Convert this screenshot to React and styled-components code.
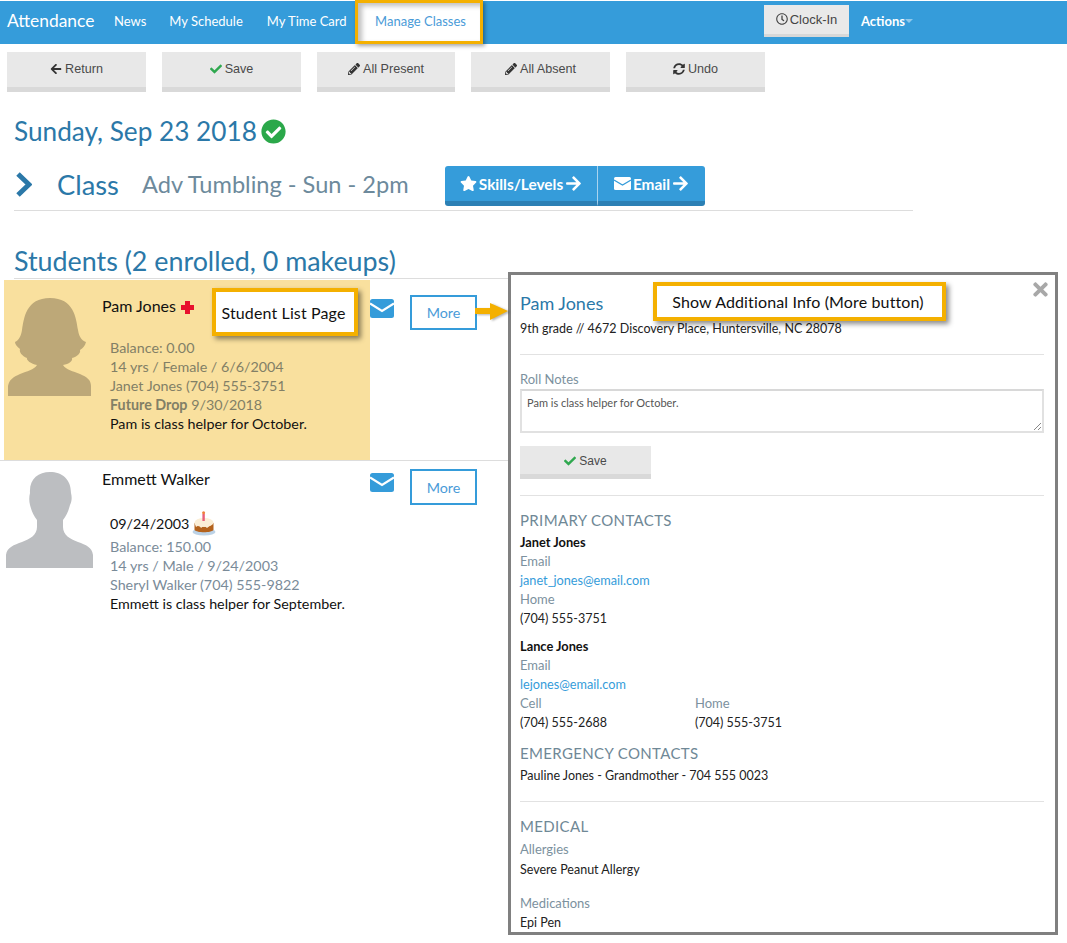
import React from "react";
import styled, { createGlobalStyle } from "styled-components";
import { FaArrowLeft, FaArrowRight, FaCheck, FaCheckCircle, FaPencilAlt, FaRegClock, FaStar, FaSyncAlt, FaTimes } from "react-icons/fa";

const Global = createGlobalStyle`
  html, body { margin: 0; padding: 0; background: #fff; }
  body { font-family: Lato, "Liberation Sans", sans-serif; }
  * { box-sizing: border-box; }
`;

const Page = styled.div`
  position: relative;
  width: 1067px;
  height: 943px;
  overflow: hidden;
  padding-top: 1px;
  background: #fff;
`;

const Nav = styled.nav`
  display: flex;
  align-items: center;
  height: 43px;
  padding: 0 0 4px 7px;
  background: #359cda;
`;
const Brand = styled.div`
  width: 107px;
  font-size: 17.4px;
  color: #fff;
`;
const NavLink = styled.a`
  font-size: 13px;
  color: #fff;
  white-space: nowrap;
  margin-right: ${(p) => p.$gap}px;
`;
const ActiveTab = styled.a`
  display: flex;
  align-items: center;
  justify-content: center;
  align-self: flex-start;
  width: 128px;
  height: 44px;
  margin-top: -1px;
  padding: 0 0 3px 4px;
  font-size: 13px;
  color: #4a9bd8;
  background: #fff;
  border: 3px solid #f4b000;
  box-shadow: inset 4px 3px 5px rgba(0, 0, 0, 0.25), 2px 2px 4px rgba(0, 0, 0, 0.35);
`;
const NavRight = styled.div`
  display: flex;
  align-items: center;
  margin-left: auto;
  margin-right: 155px;
`;
const ClockIn = styled.button`
  display: flex;
  align-items: center;
  justify-content: center;
  gap: 2px;
  width: 85px;
  height: 32px;
  margin-top: 1px;
  padding: 0 0 1px;
  border: 0;
  border-bottom: 3px solid #d8d8d8;
  background: #e9e9e9;
  color: #444;
  font: 13px "Liberation Sans", sans-serif;
`;
const Actions = styled.span`
  display: flex;
  align-items: center;
  margin-left: 12px;
  width: 51px;
  font-size: 13px;
  font-weight: 700;
  color: #fff;
`;
const Caret = styled.span`
  width: 0;
  height: 0;
  border: 4.5px solid transparent;
  border-top: 4.5px solid #8ec8ec;
  border-bottom: 0;
`;

const Toolbar = styled.div`
  display: flex;
  gap: 16px;
  margin: 8px 0 0 7px;
`;
const GrayButton = styled.button`
  display: flex;
  align-items: center;
  justify-content: center;
  gap: 3px;
  flex: 0 0 ${(p) => p.$w || 139}px;
  height: ${(p) => p.$h || 40}px;
  padding: ${(p) => (p.$h ? "2px 0 0" : "0 0 2px")};
  border: 0;
  border-bottom: 5px solid #d9d9d9;
  background: #e8e8e8;
  color: #4a4a4a;
  font: ${(p) => p.$size || 12.6}px "Liberation Sans", sans-serif;
  svg { font-size: 12px; color: #333; }
`;
const Green = styled.span`
  display: flex;
  color: #2fa84f;
  svg { color: #2fa84f; }
`;

const Main = styled.main`
  padding-left: 14px;
`;
const DateHeading = styled.h1`
  display: flex;
  align-items: center;
  gap: 4px;
  height: 36px;
  margin: 21px 0 0;
  font-size: 26.2px;
  font-weight: 400;
  color: #2b78a8;
`;
const CheckBadge = styled.span`
  display: flex;
  font-size: 25px;
  color: #2ba84a;
`;
const ClassRow = styled.div`
  display: flex;
  align-items: center;
  width: 899px;
  height: 58px;
  margin-top: 4px;
  padding-top: 12px;
  border-bottom: 1px solid #ddd;
`;
const Chevron = styled.svg`
  flex: 0 0 17px;
  width: 17px;
  height: 25px;
  margin: -7px 25px 0 1px;
`;
const ClassLabel = styled.span`
  width: 85px;
  margin-top: -7px;
  font-size: 27.3px;
  color: #2b78a8;
`;
const ClassName = styled.span`
  width: 303px;
  margin-top: -7px;
  font-size: 23.6px;
  color: #6d8a9c;
`;
const BlueGroup = styled.div`
  display: flex;
  margin-bottom: 3px;
`;
const BlueButton = styled.button`
  display: flex;
  align-items: center;
  justify-content: center;
  gap: 2px;
  width: ${(p) => p.$w}px;
  height: 40px;
  padding: 0;
  border: 0;
  border-bottom: 5px solid #2c80b5;
  border-right: ${(p) => (p.$first ? "1px solid #a9d4ef" : "0")};
  border-radius: ${(p) => (p.$first ? "3px 0 0 3px" : "0 3px 3px 0")};
  background: #359cda;
  color: #fff;
  font: 700 15.4px Lato, sans-serif;
  svg { font-size: 17px; }
`;
const StudentsHeading = styled.h2`
  width: 496px;
  height: 36px;
  margin: 32px 0 0;
  border-bottom: 1px solid #ddd;
  font-size: 26.85px;
  font-weight: 400;
  line-height: 36px;
  white-space: nowrap;
  color: #2b78a8;
`;

const Row = styled.div`
  display: flex;
  width: 510px;
  height: ${(p) => p.$h}px;
  border-bottom: ${(p) => (p.$last ? "0" : "1px solid #ddd")};
`;
const StudentPanel = styled.div`
  display: flex;
  flex: 0 0 366px;
  margin-left: 4px;
  margin-top: ${(p) => p.$top}px;
  background: ${(p) => (p.$selected ? "#f9e09e" : "transparent")};
`;
const Avatar = styled.svg`
  flex: 0 0 98px;
  width: 98px;
  height: 125px;
`;
const Info = styled.div`
  flex: 1;
  padding-top: ${(p) => p.$pad}px;
`;
const Name = styled.div`
  display: flex;
  align-items: center;
  gap: 5px;
  height: 20px;
  font-size: 16px;
  color: #111;
  margin-bottom: ${(p) => p.$after}px;
`;
const RedCross = styled.svg`
  width: 13px;
  height: 13px;
  margin-top: 4px;
`;
const Line = styled.div`
  margin-left: 8px;
  font-size: 14.3px;
  line-height: 19px;
  color: ${(p) => p.$color || "#111"};
  b { font-weight: 700; }
`;
const BirthLine = styled.div`
  display: flex;
  align-items: center;
  gap: 3px;
  height: 24px;
  margin: 0 0 2px 8px;
  font-size: 14.3px;
  color: #111;
`;
const RowActions = styled.div`
  display: flex;
  gap: 16px;
  align-items: flex-start;
  padding-top: ${(p) => p.$pad}px;
`;
const MailIcon = styled.svg`
  width: 24px;
  height: 19px;
  margin-top: 4px;
`;
const MoreButton = styled.button`
  width: 67px;
  height: ${(p) => p.$h}px;
  border: 2px solid #359cda;
  background: #fff;
  color: #4a9bd8;
  font: 14.3px Lato, sans-serif;
`;

const Modal = styled.aside`
  position: absolute;
  left: 508px;
  top: 272px;
  width: 550px;
  height: 663px;
  overflow: hidden;
  padding: 16px 11px 0 9px;
  background: #fff;
  border: 3px solid #808080;
  font-size: 13px;
  line-height: 19px;
  color: #222;
`;
const CloseX = styled.span`
  position: absolute;
  right: 4px;
  top: 4px;
  display: flex;
  font-size: 21px;
  color: #a8a8a8;
`;
const ModalName = styled.div`
  height: 24px;
  font-size: 18px;
  line-height: 24px;
  color: #2b78a8;
  margin-bottom: 4px;
`;
const Rule = styled.hr`
  height: 1px;
  margin: ${(p) => p.$mt}px 0 ${(p) => p.$mb}px;
  border: 0;
  background: #e2e2e2;
`;
const Label = styled.div`
  color: #7c919e;
  margin-top: ${(p) => p.$mt || 0}px;
`;
const Value = styled.div`
  font-size: 12.5px;
  color: #222;
  margin-top: ${(p) => p.$mt || 0}px;
`;
const Person = styled.div`
  font-size: 12.8px;
  font-weight: 700;
  color: #111;
  margin-top: ${(p) => p.$mt || 0}px;
`;
const Mail = styled.a`
  display: block;
  font-size: 12.7px;
  color: #359cda;
`;
const NotesBox = styled.div`
  position: relative;
  height: 44px;
  padding: 3px 5px;
  border: 2px solid #e1e1e1;
  border-top-color: #d8d8d8;
  font-size: 11px;
  line-height: 17px;
  color: #555;
`;
const Grip = styled.svg`
  position: absolute;
  right: 1px;
  bottom: 1px;
  width: 8px;
  height: 8px;
`;
const SectionTitle = styled.div`
  height: 20px;
  font-size: 15px;
  line-height: 20px;
  letter-spacing: 0.35px;
  color: #6f8896;
  margin-top: ${(p) => p.$mt || 0}px;
`;
const TwoCols = styled.div`
  display: grid;
  grid-template-columns: 175px 175px;
`;
const SaveWrap = styled.div`
  display: flex;
  margin-top: 13px;
`;

const Callout = styled.div`
  position: absolute;
  left: ${(p) => p.$x}px;
  top: ${(p) => p.$y}px;
  width: ${(p) => p.$w}px;
  height: ${(p) => p.$h}px;
  display: flex;
  align-items: center;
  justify-content: center;
  padding-right: 3px;
  background: #fff;
  border: 4px solid #f4b000;
  box-shadow: 3px 3px 5px rgba(0, 0, 0, 0.45);
  font-size: 16px;
  letter-spacing: 0.13px;
  color: #111;
  white-space: nowrap;
`;
const PointerArrow = styled.svg`
  position: absolute;
  left: 475px;
  top: 302px;
  width: 36px;
  height: 20px;
  filter: drop-shadow(2px 1px 1px rgba(0, 0, 0, 0.3));
`;

const Envelope = () => (
  <MailIcon viewBox="0 0 24 19">
    <rect width="24" height="19" rx="2.5" fill="#359cda" />
    <path d="M0 4.5 L12 12 L24 4.5" fill="none" stroke="#fff" strokeWidth="2.2" />
  </MailIcon>
);

const Female = () => (
  <Avatar viewBox="4 0 98 125">
    <path
      fill="#bda878"
      d="M8 116 L8 106 C9 100 13 97 20 94 C27 91 34 90 37 85 C31 84 26 80 27 78 C22 76 19 72 20 69 C17 67 15 64 15 62 C19 60 21 56 22 50 C24 38 26 18 50 18 C74 18 76 38 78 50 C79 56 81 60 86 62 C85 66 83 68 80 70 C81 73 77 77 72 78 C73 81 69 84 63 85 C66 90 73 91 80 94 C87 97 91 100 91 106 L91 116 Z"
    />
  </Avatar>
);

const Male = () => (
  <Avatar viewBox="4 -4 98 125">
    <path
      fill="#bcbec1"
      d="M6 103 L6 90 C7 82 14 80 22 77 C30 74 37 70 37 62 L37 55 C33 50 31 44 30 40 C29 36 29 32 30 28 C29 14 38 7 50 7 C62 7 71 14 71 28 C72 32 72 36 70 40 C69 44 67 50 63 55 L63 62 C63 70 70 74 78 77 C86 80 92 82 93 90 L93 103 Z"
    />
  </Avatar>
);

const Cake = () => (
  <svg width="24" height="25" viewBox="0 0 24 25">
    <ellipse cx="12" cy="21" rx="11.5" ry="3.4" fill="#bcd2e6" />
    <path d="M2.5 12 L2.5 19 C5 22 19 22 21.5 19 L21.5 12 Z" fill="#b4621c" />
    <ellipse cx="12" cy="11.5" rx="9.5" ry="4.6" fill="#fbeed6" />
    <path d="M2.5 12 L4 16 L7 14 L9 17 L12 14.5 L15 17 L18 14.5 L21.5 12 Z" fill="#fbeed6" />
    <rect x="10.4" y="3" width="2.4" height="7" fill="#e8607a" />
    <circle cx="11.6" cy="1.8" r="1.5" fill="#f0803c" />
  </svg>
);

export default function App() {
  return (
    <Page>
      <Global />
      <Nav>
        <Brand>Attendance</Brand>
        <NavLink $gap={23}>News</NavLink>
        <NavLink $gap={24}>My Schedule</NavLink>
        <NavLink $gap={8}>My Time Card</NavLink>
        <ActiveTab>Manage Classes</ActiveTab>
        <NavRight>
          <ClockIn>
            <FaRegClock size={12} />
            Clock-In
          </ClockIn>
          <Actions>
            Actions
            <Caret />
          </Actions>
        </NavRight>
      </Nav>

      <Toolbar>
        <GrayButton>
          <FaArrowLeft />
          Return
        </GrayButton>
        <GrayButton>
          <Green>
            <FaCheck />
          </Green>
          Save
        </GrayButton>
        <GrayButton $w={138}>
          <FaPencilAlt />
          All Present
        </GrayButton>
        <GrayButton>
          <FaPencilAlt />
          All Absent
        </GrayButton>
        <GrayButton>
          <FaSyncAlt />
          Undo
        </GrayButton>
      </Toolbar>

      <Main>
        <DateHeading>
          Sunday, Sep 23 2018
          <CheckBadge>
            <FaCheckCircle />
          </CheckBadge>
        </DateHeading>
        <ClassRow>
          <Chevron viewBox="0 0 17 25">
            <path d="M3 2 L14 12.5 L3 23" fill="none" stroke="#2b78a8" strokeWidth="5" />
          </Chevron>
          <ClassLabel>Class</ClassLabel>
          <ClassName>Adv Tumbling - Sun - 2pm</ClassName>
          <BlueGroup>
            <BlueButton $w={153} $first>
              <FaStar />
              Skills/Levels
              <FaArrowRight />
            </BlueButton>
            <BlueButton $w={107}>
              <svg width="17" height="13" viewBox="0 0 17 13">
                <rect width="17" height="13" rx="1.5" fill="#fff" />
                <path d="M0 3 L8.5 8 L17 3" fill="none" stroke="#359cda" strokeWidth="1.2" />
              </svg>
              Email
              <FaArrowRight />
            </BlueButton>
          </BlueGroup>
        </ClassRow>
        <StudentsHeading>Students (2 enrolled, 0 makeups)</StudentsHeading>
      </Main>

      <section>
        <Row $h={182}>
          <StudentPanel $selected $top={1}>
            <Female />
            <Info $pad={15}>
              <Name $after={23}>
                Pam Jones
                <RedCross viewBox="0 0 13 13">
                  <path d="M4 0 H9 V4 H13 V9 H9 V13 H4 V9 H0 V4 H4 Z" fill="#e8112d" />
                </RedCross>
              </Name>
              <Line $color="#827f66">Balance: 0.00</Line>
              <Line $color="#827f66">14 yrs / Female / 6/6/2004</Line>
              <Line $color="#827f66">Janet Jones (704) 555-3751</Line>
              <Line $color="#827f66">
                <b>Future Drop</b> 9/30/2018
              </Line>
              <Line>Pam is class helper for October.</Line>
            </Info>
          </StudentPanel>
          <RowActions $pad={16}>
            <Envelope />
            <MoreButton $h={35}>More</MoreButton>
          </RowActions>
        </Row>
        <Row $h={200} $last>
          <StudentPanel $top={0}>
            <Male />
            <Info $pad={7}>
              <Name $after={23}>Emmett Walker</Name>
              <BirthLine>
                09/24/2003
                <Cake />
              </BirthLine>
              <Line $color="#7a8b99">Balance: 150.00</Line>
              <Line $color="#7a8b99">14 yrs / Male / 9/24/2003</Line>
              <Line $color="#7a8b99">Sheryl Walker (704) 555-9822</Line>
              <Line>Emmett is class helper for September.</Line>
            </Info>
          </StudentPanel>
          <RowActions $pad={8}>
            <Envelope />
            <MoreButton $h={36}>More</MoreButton>
          </RowActions>
        </Row>
      </section>

      <Modal>
        <CloseX>
          <FaTimes />
        </CloseX>
        <ModalName>Pam Jones</ModalName>
        <Value>9th grade // 4672 Discovery Place, Huntersville, NC 28078</Value>
        <Rule $mt={16} $mb={15} />
        <Label>Roll Notes</Label>
        <NotesBox>
          Pam is class helper for October.
          <Grip viewBox="0 0 8 8">
            <path d="M1 8 L8 1 M5 8 L8 5" stroke="#888" strokeWidth="1" />
          </Grip>
        </NotesBox>
        <SaveWrap>
          <GrayButton $w={131} $h={33} $size={12}>
            <Green>
              <FaCheck />
            </Green>
            Save
          </GrayButton>
        </SaveWrap>
        <Rule $mt={16} $mb={14} />
        <SectionTitle>PRIMARY CONTACTS</SectionTitle>
        <Person $mt={3}>Janet Jones</Person>
        <Label>Email</Label>
        <Mail>janet_jones@email.com</Mail>
        <Label>Home</Label>
        <Value>(704) 555-3751</Value>
        <Person $mt={9}>Lance Jones</Person>
        <Label>Email</Label>
        <Mail>lejones@email.com</Mail>
        <TwoCols>
          <Label>Cell</Label>
          <Label>Home</Label>
          <Value>(704) 555-2688</Value>
          <Value>(704) 555-3751</Value>
        </TwoCols>
        <SectionTitle $mt={11}>EMERGENCY CONTACTS</SectionTitle>
        <Value $mt={3}>Pauline Jones - Grandmother - 704 555 0023</Value>
        <Rule $mt={16} $mb={14} />
        <SectionTitle>MEDICAL</SectionTitle>
        <Label $mt={4}>Allergies</Label>
        <Value $mt={1}>Severe Peanut Allergy</Value>
        <Label $mt={15}>Medications</Label>
        <Value>Epi Pen</Value>
      </Modal>

      <PointerArrow viewBox="0 0 36 20">
        <path d="M0 6 L15 6 L15 1 L33 9 L15 18 L15 12 L0 12 Z" fill="#f4b000" />
      </PointerArrow>
      <Callout $x={212} $y={288} $w={146} $h={48}>Student List Page</Callout>
      <Callout $x={653} $y={282} $w={293} $h={39}>Show Additional Info (More button)</Callout>
    </Page>
  );
}
